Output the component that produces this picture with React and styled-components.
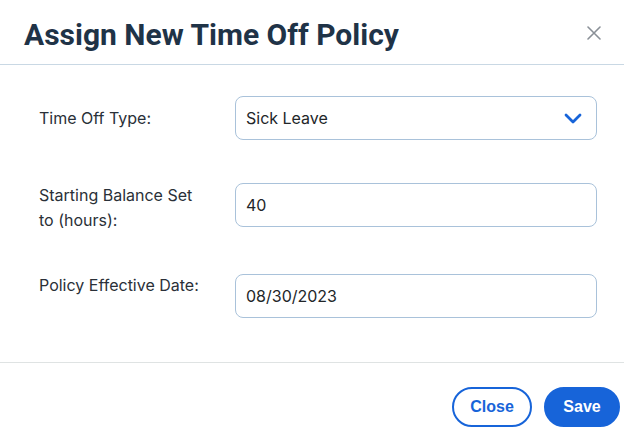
import styled, { createGlobalStyle } from "styled-components";

const GlobalStyle = createGlobalStyle`
    * { box-sizing: border-box; }
    html, body {
        margin: 0;
        padding: 0;
        background: #ffffff;
    }
    body {
        font-family: Inter, "Noto Sans", sans-serif;
    }
`

const Modal = styled.div`
    width: 624px;
    height: 436px;
    background: #ffffff;
    display: flex;
    flex-direction: column;
`

const Header = styled.header`
    height: 65px;
    display: flex;
    align-items: center;
    justify-content: space-between;
    padding: 0 22px 0 24px;
    border-bottom: 1px solid #c9d8e4;
`

const Title = styled.h1`
    margin: 0;
    font-family: Roboto, "Liberation Sans", sans-serif;
    font-size: 30px;
    font-weight: 700;
    color: #1f3347;
    padding-top: 5px;
`

const CloseIcon = styled.button`
    border: none;
    background: none;
    padding: 0;
    width: 16px;
    height: 16px;
    margin-top: 2px;
    display: flex;
    align-items: center;
    justify-content: center;
    cursor: pointer;
`

const Body = styled.div`
    flex: 1;
    display: flex;
    flex-direction: column;
    gap: 41px;
    padding: 31px 27px 0 39px;
    border-bottom: 1px solid #dfe3e3;
`

const Row = styled.div`
    display: flex;
    align-items: ${p => (p.$center ? "center" : "flex-start")};
    margin-bottom: ${p => p.$extra || 0}px;
`

const Label = styled.label`
    width: 196px;
    flex-shrink: 0;
    font-size: 16px;
    line-height: 25px;
    color: #2a3038;
    padding-right: 24px;
    margin-top: ${p => p.$offset || 0}px;
`

const Field = styled.input`
    width: 362px;
    height: 44px;
    border: 1px solid #a9c2da;
    border-radius: 8px;
    padding: 0 10px;
    font-family: Inter, "Noto Sans", sans-serif;
    font-size: 16px;
    color: #222629;
    background: #ffffff;
    outline: none;
`

const Select = styled.div`
    width: 362px;
    height: 44px;
    border: 1px solid #a9c2da;
    border-radius: 8px;
    padding: 0 14px 0 10px;
    display: flex;
    align-items: center;
    justify-content: space-between;
    font-size: 16px;
    color: #222629;
`

const Footer = styled.footer`
    height: 73px;
    display: flex;
    justify-content: flex-end;
    align-items: flex-start;
    gap: 12px;
    padding: 24px 4px 0 0;
`

const Button = styled.button`
    height: 40px;
    width: ${p => (p.$primary ? 76 : 80)}px;
    padding: 0;
    border-radius: 20px;
    border: 2px solid #1764d9;
    background: ${p => (p.$primary ? "#1764d9" : "#ffffff")};
    color: ${p => (p.$primary ? "#ffffff" : "#1764d9")};
    font-family: "Liberation Sans", Arial, sans-serif;
    font-size: 16px;
    font-weight: 700;
    cursor: pointer;
`

export default function App() {
    return (
        <>
            <GlobalStyle />
            <Modal>
                <Header>
                    <Title>Assign New Time Off Policy</Title>
                    <CloseIcon aria-label="Close">
                        <svg width="14" height="14" viewBox="0 0 14 14">
                            <path d="M1 1 L13 13 M13 1 L1 13" stroke="#8a9097" strokeWidth="1.6" strokeLinecap="round" />
                        </svg>
                    </CloseIcon>
                </Header>
                <Body>
                    <Row $center $extra={2}>
                        <Label>Time Off Type:</Label>
                        <Select>
                            <span>Sick Leave</span>
                            <svg width="18" height="11" viewBox="0 0 18 11">
                                <path d="M2 2 L9 9 L16 2" fill="none" stroke="#1764d9" strokeWidth="2.8" strokeLinecap="round" strokeLinejoin="round" />
                            </svg>
                        </Select>
                    </Row>
                    <Row>
                        <Label>Starting Balance Set to (hours):</Label>
                        <Field defaultValue="40" />
                    </Row>
                    <Row>
                        <Label $offset={-1}>Policy Effective Date:</Label>
                        <Field defaultValue="08/30/2023" />
                    </Row>
                </Body>
                <Footer>
                    <Button>Close</Button>
                    <Button $primary>Save</Button>
                </Footer>
            </Modal>
        </>
    )
}
